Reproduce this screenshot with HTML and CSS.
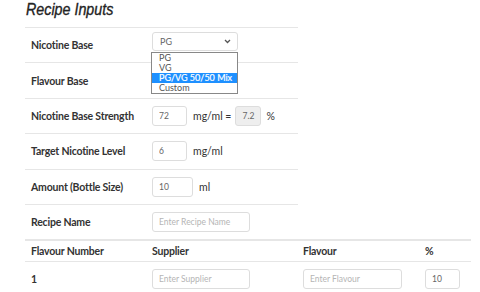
FILE: index.html
```html
<!DOCTYPE html>
<html lang="en">
<head>
    <meta charset="UTF-8">
    <meta name="viewport" content="width=device-width, initial-scale=1.0">
    <title>Recipe Inputs</title>
    <link rel="stylesheet" href="styles.css">
</head>
<body>

<div class="page">
    <h2 class="title"><span>Recipe Inputs</span></h2>

    <div class="inputs">
        <div class="row">
            <div class="label">Nicotine Base</div>
            <div class="value">
                <div class="select-wrap">
                    <div class="select">
                        <span>PG</span>
                        <svg class="chevron" width="7" height="5" viewBox="0 0 7 5"><path d="M1 1 L3.5 3.5 L6 1" fill="none" stroke="#555" stroke-width="1.3"/></svg>
                    </div>
                    <ul class="dropdown">
                        <li>PG</li>
                        <li>VG</li>
                        <li class="active">PG/VG 50/50 Mix</li>
                        <li>Custom</li>
                    </ul>
                </div>
            </div>
        </div>
        <div class="row">
            <div class="label">Flavour Base</div>
            <div class="value"></div>
        </div>
        <div class="row">
            <div class="label">Nicotine Base Strength</div>
            <div class="value">
                <input class="field w35" type="text" value="72">
                <span class="unit eq">mg/ml =</span>
                <input class="field w26 readonly" type="text" value="7.2" readonly>
                <span class="unit pct">%</span>
            </div>
        </div>
        <div class="row">
            <div class="label">Target Nicotine Level</div>
            <div class="value">
                <input class="field w35" type="text" value="6">
                <span class="unit">mg/ml</span>
            </div>
        </div>
        <div class="row">
            <div class="label">Amount (Bottle Size)</div>
            <div class="value">
                <input class="field w41" type="text" value="10">
                <span class="unit">ml</span>
            </div>
        </div>
        <div class="row">
            <div class="label">Recipe Name</div>
            <div class="value">
                <input class="field w98" type="text" placeholder="Enter Recipe Name">
            </div>
        </div>
    </div>

    <div class="flavours">
        <div class="frow head">
            <div class="c1">Flavour Number</div>
            <div class="c2">Supplier</div>
            <div class="c3">Flavour</div>
            <div class="c4">%</div>
        </div>
        <div class="frow">
            <div class="c1 bold">1</div>
            <div class="c2"><input class="field w98" type="text" placeholder="Enter Supplier"></div>
            <div class="c3"><input class="field w99" type="text" placeholder="Enter Flavour"></div>
            <div class="c4"><input class="field w35" type="text" value="10"></div>
        </div>
    </div>
</div>

</body>
</html>
```
FILE: styles.css
```css
* {
    margin: 0;
    padding: 0;
    box-sizing: border-box;
}

body {
    font-family: Lato, "Open Sans", sans-serif;
    font-size: 10.5px;
    color: #333;
    background-color: #fff;
    overflow: hidden;
}

.page {
    padding-left: 25px;
}

.title {
    font-family: "Liberation Sans", sans-serif;
    font-style: italic;
    font-weight: normal;
    font-size: 17px;
    line-height: 20px;
    height: 27px;
    padding-left: 1px;
    color: #222;
}

.title span {
    display: inline-block;
    transform: scaleX(0.84);
    transform-origin: left center;
    -webkit-text-stroke: 0.35px #222;
}

/* recipe inputs */
.inputs {
    width: 273px;
}

.row {
    display: flex;
    align-items: center;
    height: 35.4px;
    border-top: 1px solid #e6e6e6;
}

.label {
    width: 127px;
    padding-left: 6px;
    font-weight: bold;
    letter-spacing: -0.2px;
}

.value {
    display: flex;
    align-items: center;
}

.unit {
    margin: 0 6px;
}

.unit.eq {
    margin-right: 4px;
}

.unit.pct {
    margin-left: 5px;
}

.field {
    height: 20px;
    border: 1px solid #ddd;
    border-radius: 3px;
    padding-left: 6px;
    font-family: Lato, "Open Sans", sans-serif;
    font-size: 8.5px;
    color: #666;
    background-color: #fff;
    outline: none;
}

.field::placeholder {
    color: #b5b5b5;
}

.field.readonly {
    background-color: #eee;
}

.w26 { width: 26px; }
.w35 { width: 35px; }
.w41 { width: 41px; }
.w98 { width: 98px; }
.w99 { width: 99px; }

/* select with open list */
.select-wrap {
    position: relative;
    margin-top: -7px;
}

.select {
    display: flex;
    align-items: center;
    justify-content: space-between;
    width: 86px;
    height: 19px;
    border: 1px solid #ddd;
    border-radius: 3px;
    padding: 0 6px 0 7px;
    font-size: 9px;
    color: #666;
}

.dropdown {
    position: absolute;
    left: -1px;
    top: 20px;
    width: 87px;
    list-style: none;
    border: 1px solid #888;
    background-color: #fff;
    font-size: 9px;
    color: #555;
    padding: 0;
    z-index: 2;
}

.dropdown li {
    height: 10px;
    line-height: 10px;
    padding-left: 7px;
}

.dropdown li.active {
    background-color: #1e90ff;
    color: #fff;
    -webkit-text-stroke: 0.2px #fff;
}

/* flavour table */
.flavours {
    width: 446px;
    margin-top: -0.4px;
}

.frow {
    display: flex;
    align-items: center;
    height: 36px;
    border-top: 1px solid #e6e6e6;
}

.frow.head {
    height: 22px;
    border-top: 2px solid #e6e6e6;
    font-weight: bold;
    letter-spacing: -0.2px;
}

.c1 {
    width: 127px;
    padding-left: 6px;
}

.c2 {
    width: 151px;
}

.c3 {
    width: 122px;
}

.c4 {
    flex: 1;
}

.bold {
    font-weight: bold;
}
```
